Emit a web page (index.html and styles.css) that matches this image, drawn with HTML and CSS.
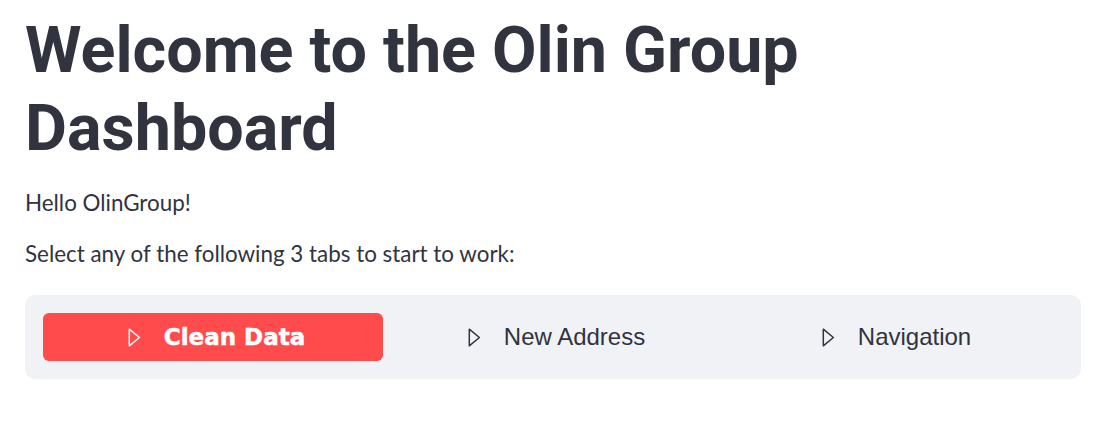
FILE: index.html
```html
<!DOCTYPE html>
<html>
<head>
<meta charset="utf-8">
<link rel="stylesheet" href="styles.css">
</head>
<body>
<main class="main">
  <h1 class="title">Welcome to the Olin Group Dashboard</h1>
  <p class="text">Hello OlinGroup!</p>
  <p class="text">Select any of the following 3 tabs to start to work:</p>
  <nav class="menu">
    <a class="tab active">
      <svg class="icon" viewBox="0 0 13 19" width="13" height="19"><path d="M1.3 1.2 L11.4 9.5 L1.3 17.8 Z" fill="none" stroke="currentColor" stroke-width="1.5" stroke-linejoin="round"/></svg>
      <span class="label">Clean Data</span>
    </a>
    <a class="tab">
      <svg class="icon" viewBox="0 0 13 19" width="13" height="19"><path d="M1.3 1.2 L11.4 9.5 L1.3 17.8 Z" fill="none" stroke="currentColor" stroke-width="1.5" stroke-linejoin="round"/></svg>
      <span class="label">New Address</span>
    </a>
    <a class="tab">
      <svg class="icon" viewBox="0 0 13 19" width="13" height="19"><path d="M1.3 1.2 L11.4 9.5 L1.3 17.8 Z" fill="none" stroke="currentColor" stroke-width="1.5" stroke-linejoin="round"/></svg>
      <span class="label">Navigation</span>
    </a>
  </nav>
</main>
</body>
</html>
```
FILE: styles.css
```css
html, body {
  margin: 0;
  padding: 0;
  background: #ffffff;
}
.main {
  width: 1056px;
  margin-left: 25px;
  padding-top: 11px;
  color: #31333f;
}
.title {
  margin: 0;
  font-family: "Roboto", sans-serif;
  font-weight: 700;
  font-size: 64.6px;
  line-height: 78px;
  color: #31333f;
  width: 800px;
}
.text {
  margin: 0;
  font-family: "Lato", sans-serif;
  font-size: 22.4px;
  line-height: 32px;
  color: #31333f;
}
.title + .text {
  margin-top: 20px;
}
.text + .text {
  margin-top: 19px;
}
.menu {
  margin-top: 25px;
  background: #f0f2f6;
  border-radius: 10px;
  padding: 18px;
  display: grid;
  grid-template-columns: repeat(3, 1fr);
}
.tab {
  height: 48px;
  box-sizing: border-box;
  padding-left: 7px;
  border-radius: 6px;
  display: flex;
  align-items: center;
  justify-content: center;
  color: #31333f;
  font-family: "Liberation Sans", Arial, sans-serif;
  font-size: 24px;
  text-decoration: none;
}
.tab .icon {
  margin-right: 23px;
  flex: none;
}
.tab.active {
  background: #ff4b4b;
  color: #ffffff;
}
.tab.active .label {
  font-family: "DejaVu Sans", sans-serif;
  font-weight: 700;
  font-size: 23px;
  -webkit-text-stroke: 0.5px #ffffff;
}
```
